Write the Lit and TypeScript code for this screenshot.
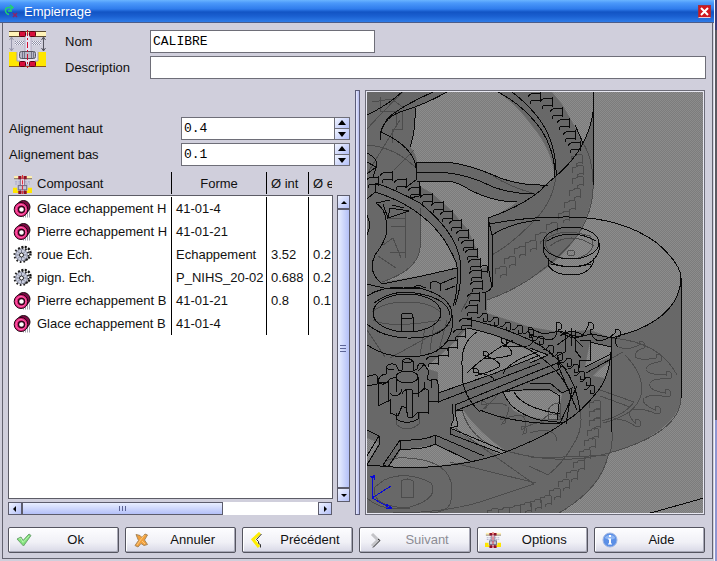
import { LitElement, html, svg, css } from "lit";
import { customElement } from "lit/decorators.js";

type Pt = [number, number];

interface Part {
  kind: "stone" | "gear";
  name: string;
  shape: string;
  inner: string;
  outer: string;
}

const PARTS: Part[] = [
  { kind: "stone", name: "Glace echappement H", shape: "41-01-4", inner: "", outer: "" },
  { kind: "stone", name: "Pierre echappement H", shape: "41-01-21", inner: "", outer: "" },
  { kind: "gear", name: "roue Ech.", shape: "Echappement", inner: "3.52", outer: "0.2" },
  { kind: "gear", name: "pign. Ech.", shape: "P_NIHS_20-02", inner: "0.688", outer: "0.2" },
  { kind: "stone", name: "Pierre echappement B", shape: "41-01-21", inner: "0.8", outer: "0.1" },
  { kind: "stone", name: "Glace echappement B", shape: "41-01-4", inner: "", outer: "" },
];

/* ---------- icons ---------- */

const assemblyIcon = html`<svg width="38" height="38" viewBox="0 0 38 38" aria-hidden="true">
  <rect x="0" y="2" width="37" height="4" fill="#fff3b8" />
  <path d="M0 1.5H37M0 6.5H37" stroke="#5a4a30" fill="none" />
  <rect x="16" y="4" width="6" height="30" fill="#e9e4f2" stroke="#b0acc2" />
  <path d="M2.500 7V21M.5 10l2-3 2 3M.5 18l2 3 2-3" stroke="#9898ac" fill="none" />
  <path d="M34.500 7V21M32.500 10l2-3 2 3M32.500 18l2 3 2-3" stroke="#55555f" fill="none" />
  <path d="M6 13H15M23 13H32" stroke="#f4f4fa" stroke-width="4" />
  <path d="M6 11.500H15M23 11.500H32M7 12.500H15M24 12.500H32M6 13.500H15M23 13.500H32M7 14.500H15M24 14.500H32" stroke="#9090a6" stroke-dasharray="1 1" fill="none" />
  <path d="M0 22H8V31H10V36H0ZM37 22H29V31H27V36H37Z" fill="#ffe600" />
  <path d="M8 22V31H11V35H26V31H29V22" fill="#e8e4f0" stroke="#a09cb4" />
  <rect x="10.500" y="21.500" width="16" height="7" rx="2" fill="#b8b8c6" stroke="#55555f" />
  <path d="M13.500 22v6M15.500 22v6M22.500 22v6M24.500 22v6" stroke="#74748a" />
  <path d="M0 36.500H37" stroke="#8a5a20" />
  <g fill="#d8103c" stroke="#5a0010"><rect x="10.500" y="1.500" width="6" height="5" rx="1" /><rect x="20.500" y="1.500" width="6" height="5" rx="1" /><rect x="10.500" y="31.500" width="6" height="5" rx="1" /><rect x="20.500" y="31.500" width="6" height="5" rx="1" /></g>
  <path d="M18.500 0V38" stroke="#d01030" stroke-dasharray="6 2 2 2" />
</svg>`;

const assemblySmall = (size: number) => html`<svg width=${size} height=${size} viewBox="0 0 18 18" aria-hidden="true">
  <rect x="1" y="1" width="17" height="2" fill="#fff0b0" />
  <path d="M1 3.500H18" stroke="#8a7a58" />
  <path d="M2 6.500h14M2 8.500h5M12 8.500h4" stroke="#a8a8c8" stroke-dasharray="2 1" />
  <path d="M0 12H4V15H6V17H0ZM18 12H14V15H12V17H18Z" fill="#ffe600" />
  <rect x="7" y="3" width="4" height="13" fill="#e8dcea" stroke="#8c7c94" />
  <rect x="5" y="10" width="8" height="4" fill="#c4c4d2" stroke="#70708a" />
  <path d="M5 1h3v3H5zM10 1h3v3h-3zM5 15h3v3H5zM10 15h3v3h-3z" fill="#901028" />
  <path d="M9 0V18" stroke="#e03040" stroke-dasharray="4 1" />
</svg>`;

const stoneIcon = html`<svg width="19" height="19" viewBox="0 0 19 19" aria-hidden="true">
  <path d="M10 17.500h7M12 15.500h6M14 13.500h4" stroke="#a4a4b0" stroke-width="2" stroke-dasharray="1 1" />
  <ellipse cx="10.500" cy="8" rx="6.500" ry="6.500" fill="#7c0a44" stroke="#1c0410" />
  <ellipse cx="8" cy="10.500" rx="6.800" ry="7" fill="#e8207c" stroke="#1c0410" />
  <ellipse cx="8" cy="10.500" rx="5" ry="5" fill="none" stroke="#ff74b4" />
  <ellipse cx="8.500" cy="10.500" rx="3" ry="3" fill="#fff" stroke="#30041a" stroke-width="1.400" />
</svg>`;

const gearIcon = html`<svg width="19" height="19" viewBox="0 0 19 19" aria-hidden="true">
  <circle cx="11" cy="8.500" r="6.500" fill="none" stroke="#111" stroke-width="2.400" stroke-dasharray="2 1.400" />
  <circle cx="8.500" cy="10" r="6.800" fill="none" stroke="#222" stroke-width="2.400" stroke-dasharray="1.600 1.960" />
  <circle cx="8.500" cy="10" r="5.800" fill="#c8ccdc" stroke="#8c90a4" />
  <path d="M8.500 5v3M8.500 12v3M3.500 10h3M10.500 10h3M5 6.500l2 2M10 11.500l2 2M12 6.500l-2 2M7 11.500l-2 2" stroke="#7c8094" />
  <circle cx="8.500" cy="10" r="2" fill="#fff" stroke="#222" />
</svg>`;

const okIcon = html`<svg width="16" height="16" viewBox="0 0 16 16" aria-hidden="true">
  <path d="M1 7l4-2 2 3.500L13 2l2 1.500L7.500 14z" fill="#7fe07a" stroke="#6fa272" />
  <path d="M3 7l2-.5 2 4L13 4" fill="none" stroke="#b8f8ae" />
</svg>`;
const cancelIcon = html`<svg width="16" height="16" viewBox="0 0 16 16" aria-hidden="true">
  <path d="M3 2.500l4 1 2 2 3-3.500 2.500 1-3 5 3 4.500-3.500 1-3-2-3 3.500-3-1.500 3.500-5z" fill="#f2a03c" stroke="#a8875c" />
  <path d="M4 13l3.500-5 4-5M9 9l3 3" fill="none" stroke="#ffc878" />
</svg>`;
const prevIcon = html`<svg width="16" height="16" viewBox="0 0 16 16" aria-hidden="true">
  <path d="M10 1L3 7.500 9 15" fill="none" stroke="#ffee00" stroke-width="3" />
  <path d="M11.500 2L6.500 7.500l2 2v2l2 1v3" fill="none" stroke="#333" />
</svg>`;
const nextIcon = html`<svg width="16" height="16" viewBox="0 0 16 16" aria-hidden="true">
  <path d="M5 2l6 6-6 6" fill="none" stroke="#c4c4c8" stroke-width="3" />
  <path d="M11 7l2 1.500-7 7" fill="none" stroke="#222" />
</svg>`;
const helpIcon = html`<svg width="16" height="16" viewBox="0 0 16 16" aria-hidden="true">
  <circle cx="8" cy="8" r="7" fill="#5b8fe6" stroke="#9db4e2" />
  <path d="M2.500 6a6 5 0 0 1 11 0q-5 3-11 0" fill="#8fb6f4" />
  <path d="M7 3h2v2H7zM6 6.500h3v5h1v1H6v-1h1v-4H6z" fill="#fff" />
</svg>`;

const ARROWS = {
  up: "M1 6L4 3 7 6Z",
  down: "M1 3L4 6 7 3Z",
  left: "M5 1L2 4 5 7Z",
  right: "M3 1L6 4 3 7Z",
  more: "M0 6L4 1 8 6Z",
  less: "M0 2L4 7 8 2Z",
};
const arrow = (dir: keyof typeof ARROWS) =>
  html`<svg width="8" height="8" viewBox="0 0 8 8" aria-hidden="true"><path d=${ARROWS[dir]} fill="#000" /></svg>`;

/* ---------- 3D view of the movement ---------- */

const hooks = (pts: Pt[]) =>
  pts.map(([x, y]) => `M${x - 12} ${y + 4}Q${x - 9} ${y - 1} ${x - 5} ${y + 1}L${x} ${y}v8l-7 -1q-4 1 -2 4`).join("");
const saws = (pts: Pt[]) =>
  pts.map(([x, y]) => `M${x - 10} ${y + 5}Q${x - 6} ${y + 5} ${x - 4} ${y}L${x} ${y + 1}v7l-4 1v-4`).join("");
const steps = (pts: Pt[]) => pts.map(([x, y]) => `M${x - 11} ${y + 8}v-6q4 2 6 -2l5 1v8q-5 -2 -6 3`).join("");

const LEFT_TEETH: Pt[] = [
  [378, 177], [392, 172], [406, 179], [420, 187], [432, 194], [443, 202], [452, 211], [461, 220],
  [468, 230], [473, 240], [477, 249], [480, 259], [481, 270], [482, 281], [479, 293], [477, 305],
  [471, 318], [465, 329], [457, 340], [448, 348], [438, 356],
];
const TOP_TEETH: Pt[] = [
  [540, 93], [552, 98], [562, 108], [569, 119], [575, 131], [580, 142],
];
const TOP_FAINT: Pt[] = [
  [582, 154], [583, 165], [583, 176], [580, 188], [575, 200], [569, 211], [557, 222], [546, 232],
  [536, 240], [525, 246], [515, 256], [506, 266],
];
const LOW_TEETH: Pt[] = [
  [487, 313], [498, 317], [510, 322], [522, 325], [533, 329], [543, 336], [553, 345], [562, 352],
  [571, 358], [578, 364], [584, 371], [590, 377], [594, 385],
];
const LOW_FAINT: Pt[] = [
  [600, 400], [600, 409], [600, 418], [598, 428], [595, 438], [590, 449], [584, 460], [577, 470],
  [569, 479], [560, 488], [551, 495], [541, 499], [531, 502], [520, 505], [509, 507], [498, 508],
];

const LIGHT = [
  "M447 92H498Q518 106 532 126Q551 148 555 177Q548 186 540 185Q515 184 493 175Q468 162 440 162H417Q416 153 410 147Q415 128 415 108Q432 100 447 92Z",
  "M419 181H447Q458 182 470 190Q493 202 517 202Q503 213 488 218V266L481 268 477 250 468 230 452 211 432 193 419 186Z",
  "M594 92H704V514H557Q588 496 600 477Q606 466 609 453Q639 445 657 432Q680 416 681 398V278Q680 310 637 330L612 338 590 330 560 332 530 327 487 313V300Q505 293 530 279Q565 259 582 228Q592 206 594 185Z",
  "M552 92H593V112Q591 128 583 143L574 125 562 104Z",
  "M420 213Q447 236 457 268Q418 277 382 282Q419 268 420 248Z",
  "M437 358L457 340 467 328Q485 331 500 338L540 355 493 374 438 393V372L425 368Z",
  "M455 412L463 410Q478 432 507 452L500 455 450 428Z",
  "M400 450L435 445 470 461Q427 469 388 467L398 456Z",
  "M367 438L379 443 367 463Z",
  "M503 392Q522 390 540 391H550L562 394 557 420Q525 418 513 410Z",
  "M530 348L548 355 530 363Z",
  "M590 342L611 347V357L585 367Z",
  "M601 368L610 362Q609 370 605 378L593 376Z",
];

const ESCAPE: Pt[] = [
  [641, 345], [658, 358], [668, 375], [667, 393], [657, 410], [637, 423],
  [523, 430], [502, 420], [483, 405],
];
const ESCAPE_FRONT: Pt[] = [
  [475, 372], [485, 355], [503, 342], [530, 331], [558, 326], [590, 326], [617, 333],
];

/* Tooth of the escape wheel: a small foot joined to the rim by two hollow flanks. */
const WHEEL = { x: 572, y: 382, rx: 97, ry: 55 };
const onWheel = (r: number, a: number) =>
  `${Math.round(WHEEL.x + r * WHEEL.rx * Math.cos(a))} ${Math.round(WHEEL.y + r * WHEEL.ry * Math.sin(a))}`;
const spur = ([x, y]: Pt) => {
  const a = Math.atan2((y - WHEEL.y) / WHEEL.ry, (x - WHEEL.x) / WHEEL.rx);
  return `M${onWheel(0.8, a - 0.16)}Q${onWheel(0.8, a - 0.03)} ${x - 2} ${y}v-3l3 -1l2 2v5l-3 1` +
    `Q${onWheel(0.84, a + 0.05)} ${onWheel(0.8, a + 0.16)}`;
};

const scene = svg`
  <defs>
    <pattern id="dither" width="2" height="2" patternUnits="userSpaceOnUse">
      <rect width="2" height="2" fill="#7c7c7c" />
      <path d="M0 0h1v1h-1zM1 1h1v1h-1z" fill="#8c8c8c" />
    </pattern>
  </defs>
  <rect x="366" y="91" width="900" height="900" fill="#686868" />
  <rect x="704" y="91" width="600" height="900" fill="url(#dither)" />
  <path d=${LIGHT.join("")} fill="url(#dither)" />
  <g class="faint">
    <path d=${steps(TOP_FAINT)} />
    <path d=${steps(LOW_FAINT)} />
    <path d=${ESCAPE.map(spur).join("")} />
    <path d="M583 143Q594 160 593 190Q592 210 582 228Q570 250 530 279Q508 293 487 300M556 177Q552 205 530 225Q510 245 492 255" />
    <path d="M580 410Q584 428 573 445Q564 462 548 475L529 466M530 457Q560 458 606 455M455 428L534 484 480 502Q440 514 380 513M450 462L536 483" />
    <path d="M612 338Q660 342 677 375M612 432Q613 450 608 456Q600 490 557 514M681 398Q680 433 609 453" />
    <path d="M462 410Q470 440 503 450Q560 467 609 453" />
    <path d="M625 355Q645 375 641 395Q636 415 603 423M612 358L623 352M600 390L634 402M600 396L630 407M634 402Q625 415 602 421" />
    <path d="M383 465Q385 457 407 458Q445 460 451 482V500Q450 512 430 513M384 480Q407 470 431 483Q440 499 407 508Q370 506 375 487ZM401 481q7-4 12 0v16h-12zM367 498Q382 512 410 508" />
    <path d="M548 410q5-8 12-7v16h-12zM540 423q12-17 24-2M530 433q25-8 27 8" />
    <path d="M367 129Q390 104 403 92M388 111h14v18h-10v14M380 97v14h16v16M372 102l20-3 12 9M367 145Q395 147 416 168M394 170l20-20M367 174L400 120" />
    <path d="M387 218h18v34h-15M391 226h14M405 210v48M420 208V248Q418 270 382 282M378 256l18 12M383 245l10-7 8 20" />
    <path d="M372 312Q383 302 407 302T441 313M373 320Q390 329 441 320M367 330L385 357M450 325l-60 33M447 320l-8 30M430 350l4-26M420 354l5-26" />
    <path d="M493 176Q510 187 535 194M463 330l-8 8M473 290l-12 22" />
    <path d="M545 240Q560 227 590 236Q600 252 575 259Q545 259 545 240M567 253a4 3 0 1 0 8 0a4 3 0 1 0-8 0M550 246Q571 230 594 246" />
    <path d="M396 410v14q11 10 23 0v-12" />
  </g>
  <g class="edge">
    <path d=${hooks(LEFT_TEETH)} />
    <path d=${hooks(TOP_TEETH)} />
    <path d=${saws(LOW_TEETH)} />
    <path d=${ESCAPE_FRONT.map(spur).join("")} />
    <path d="M402 92Q388 105 367 115M447 92Q424 105 400 112Q381 119 380 138M433 92Q400 107 388 118Q382 127 381 132Q414 147 416 168M380 132V140M415 108Q416 130 410 147M416 162H440Q462 162 493 175Q515 185 540 185M416 172H440Q468 174 493 187Q513 194 534 194M417 181H447Q458 182 470 190Q493 202 517 202M416 162V180L405 188M419 181V196L410 198" />
    <path d="M367 153Q377 158 377 165L373 177M367 162L376 167 367 174M375 183Q392 188 420 203Q460 235 461 268Q461 290 455 305M375 192Q420 206 443 238Q458 262 457 268V284Q456 300 453 306M375 183V192L367 199" />
    <path d="M376 203Q385 209 386 220V235Q384 243 375 255Q367 272 382 284Q420 277 457 268M367 284L388 289 420 288M376 203L390 200M390 208L409 211 388 218ZM383 204l5 14M367 215q5 10 0 20M392 205l12 3" />
    <path d="M593 92V112Q591 128 583 143Q575 160 555 177Q545 185 540 191Q520 207 488 218V266L492 287V235L488 218M492 235Q510 223 540 220M492 287Q488 293 482 293M485 292V310M481 267q3-3 6-1v6q-4 0-6-1" />
    <path d="M498 92Q523 105 540 128Q555 150 555 177M512 92Q538 112 548 134Q557 155 556 176M575 125L583 143M540 185H548M593 112V185" />
    <path d="M490 224Q525 217 563 217Q620 216 657 243Q681 264 681 278Q680 312 637 330L612 338M681 278V398M611 338V432" />
    <ellipse cx="571" cy="243" rx="28" ry="16" />
    <path d="M543 243V250Q548 267 571 267T599 250V243M548 258V265Q554 275 571 275T593 263V258M551 264Q571 269 591 264M547 241Q558 234 571 234T596 241" />
    <ellipse cx="407" cy="313" rx="34" ry="19" />
    <path d="M367 296Q385 284 420 288Q452 297 452 315Q447 339 407 338Q382 337 367 324M452 315V328Q447 357 407 357Q385 357 367 345M374 303Q388 292 407 292Q448 296 450 315M401 316a6 3 0 1 0 12 0a6 3 0 1 0-12 0M401 317V331M413 317V331M412 288l6-3 8 3M430 289V283Q435 279 440 284V291M440 284l16-7M445 290l10-4" />
    <path d="M467 319Q500 326 530 340Q573 360 580 410M467 328Q498 334 530 350Q566 372 574 404M540 355L493 374 438 393M540 363L438 402M560 362L530 374 455 405M560 369L455 411M438 393V402M455 405V412L458 426 450 428V434L503 454M452 404V410L454 418 451 426M450 428L507 452M455 411L463 410" />
    <path d="M611 352Q609 378 597 392Q582 412 563 423Q545 437 503 453Q455 470 393 467L367 465" />
    <path d="M400 440Q425 441 435 435L484 456M400 440V449Q425 450 435 444L470 461M435 435V444M400 440L383 465 388 467 400 449M367 430L379 436V445L367 465M379 436L367 456" />
    <path d="M477 332Q461 342 462 365V375Q463 396 480 412M513 340Q486 354 467 373M540 351Q507 362 503 374M503 392Q518 389 550 390L560 396 557 420M503 392Q511 413 540 420L565 423M514 392Q522 408 560 414M530 384L550 383 562 393 572 388 566 424M557 363L577 410M557 363L567 370M577 386L560 423M590 342L611 347M585 367L611 354M586 373L611 359M580 340h10v20h-11v8M565 330v22l-8 4 4 12M575 330v20l6 8M560 336q12-9 24 0M557 345l14-10 12 12M571 328v18M530 348L548 355 530 363" />
    <path d="M612 338l-20-4-14 3-18-6-16 3-14-5M480 410Q510 423 560 424" />
  </g>
  <g class="edge solid">
    <path d="M378 383Q378 375 386 374V367Q390 362 396 365L399 371 402 370V361Q407 356 413 361V371L417 369Q418 361 424 364L428 370V375Q426 381 431 380Q438 377 438 384V402L428 401V413L418 412 412 418 408 417 406 408 402 406 398 416 390 413V400L378 406Z" />
    <ellipse cx="407" cy="377" rx="11" ry="6" />
    <path d="M396 377v15M418 377v20M378 383l10-1v20M390 393q3 4 8 2q5-3 3-6M402 394q2-6 10-4v27M406 390v18M412 394q9 0 12-6l4 2v18M424 382v8M431 380v8M378 383q7 3 10-2q3-4 9-3M386 367q3 4 8 2M402 361q5 4 11 0M424 364q-3 5-6 7M367 377q8-4 10-1v8M367 386l10-2" />
    <path class="open" d="M396 413v6q11 7 22 0v-7" />
  </g>
  <path class="edge" d="M647 514L704 498" />
  <path class="axis" d="M372 476V498L392 509M372 498L391 486M370 476l3 2 1-3v5M386 504l6 4-6 1" />
`;

@customElement("app-root")
export class AppRoot extends LitElement {
  static styles = css`
    :host { display: block; font: 13px/16px "Liberation Sans", Arial, sans-serif; color: #111; }
    * { box-sizing: border-box; }
    svg { display: block; flex: none; }
    button { font: inherit; color: inherit; margin: 0; padding: 0; }
    .desk { display: flex; min-height: 100vh; background: linear-gradient(#3c3c78 0 30px, #5c5a62 30px 420px, #8f96d0 420px); }
    .window { flex: 1; min-width: 0; display: flex; flex-direction: column; background: #d0cfdc; margin-right: 2px; border-right: 1px solid #f4f4fa; }
    .title { height: 23px; display: flex; align-items: center; gap: 6px; padding: 0 3px 0 4px; color: #fff;
      border-bottom: 1px solid #4c5c88;
      background: linear-gradient(#6ab4ff 0, #4a98fa 3px, #2f7cec 9px, #1254c4 12px, #1a5fd0 16px, #2f7ce8 22px); }
    .title h1 { font: inherit; margin: 0; padding-top: 1px; flex: 1; }
    .close { width: 13px; height: 13px; border: 1px solid #a03040; border-bottom-color: #e8c8d8; background: #d01820; display: grid; place-items: center; }
    .frame { flex: 1; display: flex; flex-direction: column; margin: 0 1px 2px 2px; padding: 7px 6px 5px 5px; border: 1px solid #63636f; border-top: 0; }
    .head { display: grid; grid-template-columns: 38px 103px 1fr; row-gap: 3px; align-items: center; padding-left: 1px; }
    .head > svg { grid-row: 1 / 3; align-self: start; }
    .head label { padding-left: 18px; }
    input { font: 13px/16px "Liberation Mono", monospace; color: #000; height: 23px; border: 1px solid #6e6e78; background: #fff;
      padding: 0 2px 1px; margin: 0; width: 100%; min-width: 0; border-radius: 0; outline: 0; }
    .short { width: 225px; }
    .main { flex: 1; display: grid; grid-template-columns: 342px 5px minmax(0, 1fr); column-gap: 5px; margin-top: 11px; }
    .left { display: flex; flex-direction: column; padding-top: 27px; min-width: 0; }
    .spins { display: grid; grid-template-columns: 1fr 169px; row-gap: 3px; align-items: center; }
    .spins label { padding-left: 1px; }
    .spin { display: flex; }
    .spin input { flex: 1; }
    .updown { display: flex; flex-direction: column; width: 15px; border: 1px solid #6e6e78; border-left: 0; }
    .updown button { flex: 1; border: 0; display: grid; place-items: center; background: linear-gradient(135deg, #f0f4ff, #b4c0f8); }
    .updown button + button { border-top: 1px solid #6e6e78; }
    .list { flex: 1; display: grid; grid-template-columns: minmax(0, 1fr) 13px; grid-template-rows: 1fr 13px; gap: 3px; margin-top: 6px; }
    .clip { display: grid; grid-template-columns: 100%; overflow: hidden; margin-right: 1px; }
    .clip > * { grid-area: 1 / 1; }
    .sheet { margin-top: 23px; border: 1px solid #5c5c66; background: #fff; }
    .rows { overflow: hidden; margin-right: 1px; z-index: 1; }
    table { border-collapse: separate; border-spacing: 0; table-layout: fixed; width: 342px; margin-left: 1px; }
    th, td { font-weight: 400; text-align: left; white-space: nowrap; overflow: hidden; padding: 0 4px; height: 23px; border-right: 1px solid #000; }
    th { height: 22px; padding-top: 2px; }
    th:last-child, td:last-child { border-right: 0; }
    .forme { text-align: center; }
    .gap td { height: 3px; border: 0; }
    .c1 { width: 163px; } .c2 { width: 95px; } .c3 { width: 42px; } .c4 { width: 42px; }
    .name { display: flex; align-items: center; gap: 5px; }
    .bar { display: flex; background: #fff; }
    .bar button { border: 1px solid #5c5c6c; display: grid; place-items: center; background: linear-gradient(135deg, #f0f4ff, #b4c0f8); }
    .vert { flex-direction: column; margin-top: 23px; margin-bottom: -3px; }
    .vert button { height: 14px; }
    .thumb { border: 1px solid #5c5c6c; display: grid; place-items: center; }
    .vert .thumb { flex: 1; background: linear-gradient(90deg, #e8eeff, #b4c0f8); }
    .hori { margin-right: 2px; }
    .hori button { width: 14px; }
    .hori .track { flex: 1; display: flex; }
    .hori .thumb { width: 68%; background: linear-gradient(#e8eeff, #b4c0f8); }
    .split { border: 1px solid #5c5c78; background: linear-gradient(90deg, #e8eaff, #b4baec); }
    .view { position: relative; border: 1px solid #6c6c78; box-shadow: inset 0 0 0 1px #e8e8f2; overflow: hidden; background: #808080; margin-right: 1px; }
    .view svg { position: absolute; inset: 1px; width: calc(100% - 2px); height: calc(100% - 2px); }
    .faint, .edge, .axis { fill: none; stroke-width: 1; shape-rendering: crispEdges; }
    .faint { stroke: #4c4c4c; }
    .edge { stroke: #080808; }
    .solid { fill: #686868; }
    .open { fill: none; }
    .axis { stroke: #0808d8; }
    .actions { display: grid; grid-template-columns: repeat(6, 1fr); gap: 6px; margin: 12px 1px 0 0; }
    .action { height: 26px; display: flex; align-items: center; padding: 0 7px; border: 1px solid #54545f; border-radius: 2px;
      box-shadow: inset -1px -1px #a8a8b6, inset 1px 1px #fff; background: linear-gradient(#fdfdff, #f0f0f6 60%, #d8d8e6); }
    .action span { flex: 1; text-align: center; padding-left: 8px; }
    .action:disabled { color: #8c8c94; }
  `;

  private spin(id: string, label: string, value: string) {
    return html`<label for=${id}>${label}</label>
      <div class="spin">
        <input id=${id} type="text" .value=${value} />
        <div class="updown">
          <button aria-label="${label} plus">${arrow("more")}</button>
          <button aria-label="${label} moins">${arrow("less")}</button>
        </div>
      </div>`;
  }

  private action(icon: unknown, label: string, disabled = false) {
    return html`<button class="action" ?disabled=${disabled}>${icon}<span>${label}</span></button>`;
  }

  render() {
    return html`<div class="desk"><div class="window">
      <header class="title">
        <svg width="14" height="14" viewBox="0 0 14 14" aria-hidden="true">
          <path d="M8 3.500H4Q1 4 1.500 7T5 10.500M6 1l3 2.500L6 6M4 7h4" fill="none" stroke="#20d070" stroke-width="1.500" />
          <path d="M9 9l4 4M13 9l-4 4" stroke="#8c2468" stroke-width="1.500" />
        </svg>
        <h1>Empierrage</h1>
        <button class="close" aria-label="Fermer"><svg width="9" height="9" viewBox="0 0 9 9"><path d="M1 1l7 7M8 1L1 8" stroke="#fff" stroke-width="2" /></svg></button>
      </header>
      <main class="frame">
        <div class="head">
          ${assemblyIcon}
          <label for="nom">Nom</label><input id="nom" class="short" type="text" .value=${"CALIBRE"} />
          <label for="desc">Description</label><input id="desc" type="text" />
        </div>
        <div class="main">
          <section class="left">
            <div class="spins">
              ${this.spin("haut", "Alignement haut", "0.4")}
              ${this.spin("bas", "Alignement bas", "0.1")}
            </div>
            <div class="list">
              <div class="clip">
                <div class="sheet"></div>
                <div class="rows">
                  <table>
                    <colgroup><col class="c1" /><col class="c2" /><col class="c3" /><col class="c4" /></colgroup>
                    <thead><tr>
                      <th scope="col"><div class="name">${assemblySmall(19)}Composant</div></th>
                      <th scope="col" class="forme">Forme</th><th scope="col">Ø int</th><th scope="col">Ø e</th>
                    </tr></thead>
                    <tbody>
                      <tr class="gap" aria-hidden="true"><td colspan="4"></td></tr>
                      ${PARTS.map((p) => html`<tr>
                        <td><div class="name">${p.kind === "stone" ? stoneIcon : gearIcon}${p.name}</div></td>
                        <td>${p.shape}</td><td>${p.inner}</td><td>${p.outer}</td>
                      </tr>`)}
                    </tbody>
                  </table>
                </div>
              </div>
              <div class="bar vert">
                <button aria-label="Haut">${arrow("up")}</button>
                <div class="thumb"><svg width="7" height="7" viewBox="0 0 7 7"><path d="M0 .5h6M0 3.500h6M0 6.500h6" stroke="#5c6496" /></svg></div>
                <button aria-label="Bas">${arrow("down")}</button>
              </div>
              <div class="bar hori">
                <button aria-label="Gauche">${arrow("left")}</button>
                <div class="track"><div class="thumb"><svg width="7" height="7" viewBox="0 0 7 7"><path d="M.5 1v5M3.500 1v5M6.500 1v5" stroke="#5c6496" /></svg></div></div>
                <button aria-label="Droite">${arrow("right")}</button>
              </div>
            </div>
          </section>
          <div class="split"></div>
          <section class="view"><svg viewBox="367 92 336 421" preserveAspectRatio="xMinYMin slice" role="img" aria-label="Vue 3D">${scene}</svg></section>
        </div>
        <div class="actions">
          ${this.action(okIcon, "Ok")}
          ${this.action(cancelIcon, "Annuler")}
          ${this.action(prevIcon, "Précédent")}
          ${this.action(nextIcon, "Suivant", true)}
          ${this.action(assemblySmall(16), "Options")}
          ${this.action(helpIcon, "Aide")}
        </div>
      </main>
    </div></div>`;
  }
}
